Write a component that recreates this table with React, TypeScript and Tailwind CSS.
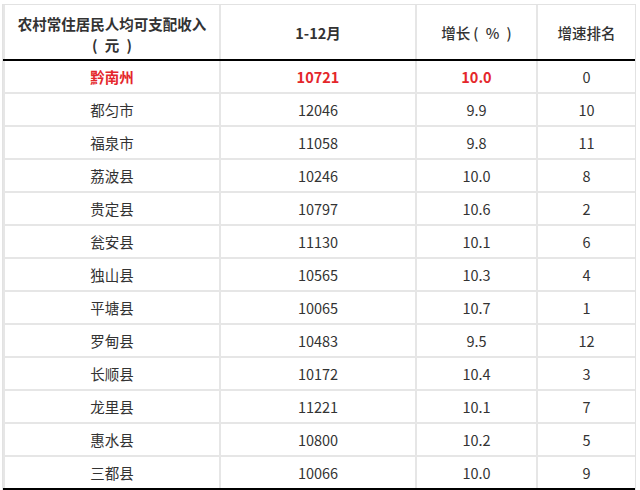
import React from "react";

const rows: [string, string, string, string][] = [
  ["黔南州", "10721", "10.0", "0"],
  ["都匀市", "12046", "9.9", "10"],
  ["福泉市", "11058", "9.8", "11"],
  ["荔波县", "10246", "10.0", "8"],
  ["贵定县", "10797", "10.6", "2"],
  ["瓮安县", "11130", "10.1", "6"],
  ["独山县", "10565", "10.3", "4"],
  ["平塘县", "10065", "10.7", "1"],
  ["罗甸县", "10483", "9.5", "12"],
  ["长顺县", "10172", "10.4", "3"],
  ["龙里县", "11221", "10.1", "7"],
  ["惠水县", "10800", "10.2", "5"],
  ["三都县", "10066", "10.0", "9"],
];

export default function App() {
  return (
    <div
      className="w-[640px] h-[490px] overflow-hidden bg-white pl-[2px] pt-[4px]"
      style={{ fontFamily: '"Noto Sans CJK SC", "Noto Sans", sans-serif' }}
    >
      <div className="w-[634px] border-l border-t border-r border-[#e2e2e2] text-[#333] text-[14.5px]">
        <div className="grid grid-cols-[218px_196px_121px_97px] h-[56px] border-b-2 border-black">
          <div className="flex flex-col items-center justify-center border-l-2 border-r-2 border-[#e6e6e6] font-bold leading-[21px] pt-[4px]">
            <span>农村常住居民人均可支配收入</span>
            <span className="whitespace-pre">{"(\u2002元\u2002)"}</span>
          </div>
          <div className="flex items-center justify-center border-r-2 border-[#e6e6e6] font-bold pt-[2px]">1-12月</div>
          <div className="flex items-center justify-center border-r-2 border-[#e6e6e6] font-medium pt-[2px] whitespace-pre">{"增长\u2009(\u2002%\u2002)"}</div>
          <div className="flex items-center justify-center font-medium pt-[2px]">增速排名</div>
        </div>
        {rows.map((r, i) => {
          const red = i === 0;
          const cls = red ? "text-[#e4262b] font-bold" : "";
          return (
            <div
              key={i}
              className={`grid grid-cols-[218px_196px_121px_97px] h-[33px] border-b-2 ${
                i === rows.length - 1 ? "border-black" : "border-[#e6e6e6]"
              }`}
            >
              <div className={`flex items-center justify-center border-l-2 border-r-2 border-[#e6e6e6] ${cls}`}>{r[0]}</div>
              <div className={`flex items-center justify-center border-r-2 border-[#e6e6e6] ${cls}`}>{r[1]}</div>
              <div className={`flex items-center justify-center border-r-2 border-[#e6e6e6] ${cls}`}>{r[2]}</div>
              <div className="flex items-center justify-center">{r[3]}</div>
            </div>
          );
        })}
      </div>
    </div>
  );
}
